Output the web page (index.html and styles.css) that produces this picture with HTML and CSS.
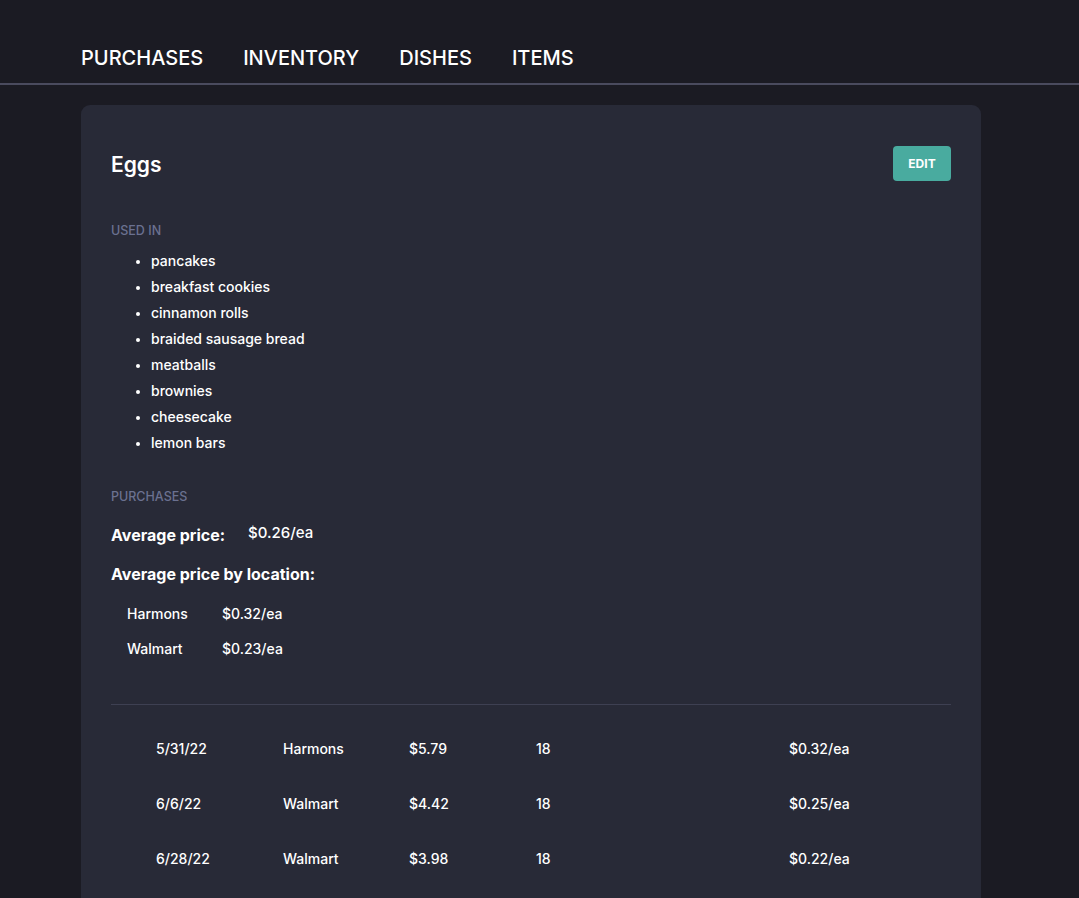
FILE: index.html
```html
<!DOCTYPE html>
<html>
<head>
<meta charset="utf-8">
<link rel="stylesheet" href="styles.css">
</head>
<body>
<nav class="nav">
  <a class="nav-link">PURCHASES</a>
  <a class="nav-link">INVENTORY</a>
  <a class="nav-link">DISHES</a>
  <a class="nav-link">ITEMS</a>
</nav>
<main class="card">
  <header class="card-head">
    <h1 class="title">Eggs</h1>
    <button class="edit">EDIT</button>
  </header>
  <h2 class="label used-label">USED IN</h2>
  <ul class="used">
    <li>pancakes</li>
    <li>breakfast cookies</li>
    <li>cinnamon rolls</li>
    <li>braided sausage bread</li>
    <li>meatballs</li>
    <li>brownies</li>
    <li>cheesecake</li>
    <li>lemon bars</li>
  </ul>
  <h2 class="label purch-label">PURCHASES</h2>
  <div class="avg">
    <span class="avg-key">Average price:</span>
    <span class="avg-val">$0.26/ea</span>
  </div>
  <div class="avg-loc">Average price by location:</div>
  <div class="loc">
    <div class="loc-row"><span class="loc-name">Harmons</span><span>$0.32/ea</span></div>
    <div class="loc-row"><span class="loc-name">Walmart</span><span>$0.23/ea</span></div>
  </div>
  <hr class="divider">
  <div class="table">
    <div class="row"><span>5/31/22</span><span>Harmons</span><span>$5.79</span><span>18</span><span></span><span>$0.32/ea</span></div>
    <div class="row"><span>6/6/22</span><span>Walmart</span><span>$4.42</span><span>18</span><span></span><span>$0.25/ea</span></div>
    <div class="row"><span>6/28/22</span><span>Walmart</span><span>$3.98</span><span>18</span><span></span><span>$0.22/ea</span></div>
  </div>
</main>
</body>
</html>
```
FILE: styles.css
```css
* { box-sizing: border-box; }
html, body { margin: 0; padding: 0; }
body {
  background: #1b1b23;
  color: #ffffff;
  font-family: Inter, "Noto Sans", sans-serif;
  height: 898px;
  overflow: hidden;
}
.nav {
  display: flex;
  gap: 40px;
  padding: 45px 81px 0;
  height: 85px;
  border-bottom: 2px solid #4a4b5e;
}
.nav-link {
  font-size: 20px;
  font-weight: 500;
  color: #ffffff;
  line-height: 26px;
}
.card {
  width: 900px;
  margin: 20px 0 0 81px;
  background: #282a37;
  border-radius: 9px;
  padding: 40px 30px 30px;
  min-height: 900px;
}
.card-head {
  display: flex;
  justify-content: space-between;
  align-items: center;
  height: 36px;
}
.title {
  margin: 4px 0 0;
  font-size: 21px;
  font-weight: 600;
  line-height: 28px;
}
.edit {
  width: 58px;
  height: 35px;
  background: #49ab9f;
  color: #ffffff;
  border: none;
  border-radius: 4px;
  font-family: inherit;
  font-size: 12px;
  font-weight: 700;
  padding: 0;
}
.label {
  margin: 0;
  font-size: 12.5px;
  font-weight: 500;
  color: #6b7190;
  line-height: 16px;
}
.used-label { margin-top: 42px; }
.used {
  margin: 9px 0 0;
  padding-left: 40px;
  font-size: 14px;
  font-weight: 500;
  line-height: 26px;
}
.used li::marker { font-size: 12px; }
.purch-label { margin-top: 33px; }
.avg {
  display: flex;
  align-items: flex-start;
  margin-top: 18px;
  height: 24px;
}
.avg-key {
  font-size: 16px;
  font-weight: 700;
  width: 137px;
  line-height: 24px;
}
.avg-val {
  font-size: 15px;
  font-weight: 500;
  line-height: 20px;
}
.avg-loc {
  margin-top: 15px;
  font-size: 16px;
  font-weight: 700;
  line-height: 24px;
}
.loc {
  padding-left: 16px;
  margin-top: 18px;
  display: flex;
  flex-direction: column;
  gap: 15px;
}
.loc-row {
  display: flex;
  font-size: 14px;
  font-weight: 500;
  line-height: 20px;
}
.loc-name { width: 95px; }
.divider {
  border: none;
  border-top: 1px solid #3e4052;
  margin: 45px 0 0;
}
.table {
  padding: 16px 0 0 45px;
}
.row {
  display: grid;
  grid-template-columns: 127px 126px 127px 126px 127px auto;
  height: 55px;
  align-items: center;
  font-size: 14px;
  font-weight: 500;
}
```
